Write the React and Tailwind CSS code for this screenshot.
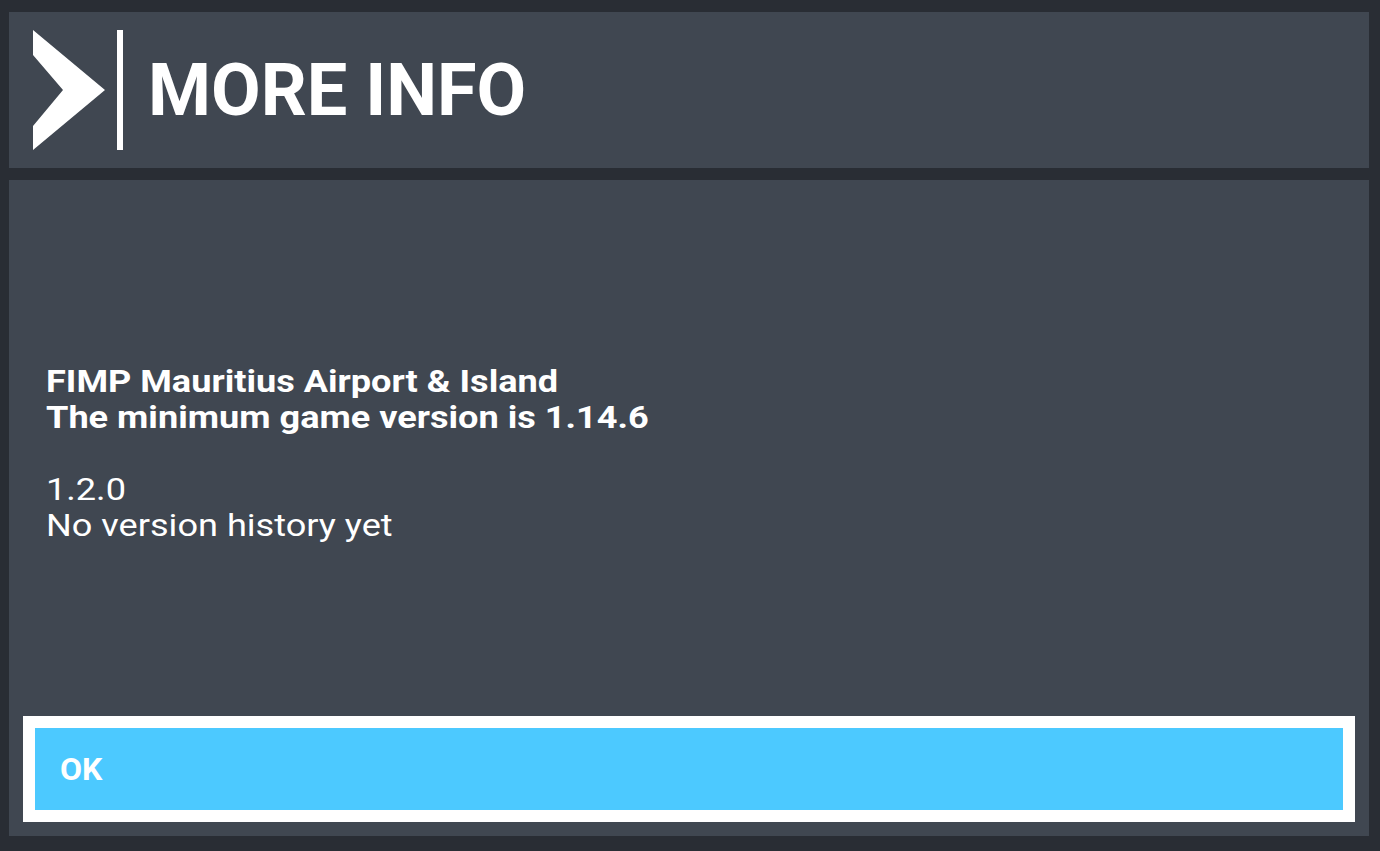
export default function App() {
  return (
    <div
      className="w-[1380px] h-[851px] bg-[#292d34] flex flex-col pt-[12px] pl-[9px] pr-[11px] pb-[15px] gap-[12px] overflow-hidden"
      style={{ fontFamily: "Roboto, 'Liberation Sans', sans-serif" }}
    >
      <div className="h-[156px] bg-[#404751] flex items-center pl-[24px] shrink-0">
        <svg width="73" height="120" viewBox="0 0 73 120" className="shrink-0">
          <polygon points="0,0 72,60 0,120 0,96 30,60 0,25" fill="#ffffff" />
        </svg>
        <div className="w-[6px] h-[120px] bg-white ml-[11px] shrink-0" />
        <div className="ml-[25px] text-white font-bold text-[72px] leading-none tracking-[0px] mt-[2px]">
          MORE INFO
        </div>
      </div>
      <div className="flex-1 bg-[#404751] flex flex-col px-[14px] pb-[14px]">
        <div className="flex-1 flex flex-col justify-center pl-[23px] text-white text-[31px] leading-[36px] pt-[12px]">
          <div className="origin-left scale-x-[1.165] whitespace-nowrap">
            <div className="font-bold">FIMP Mauritius Airport &amp; Island</div>
            <div className="font-bold">The minimum game version is 1.14.6</div>
            <div className="h-[36px]" />
            <div>1.2.0</div>
            <div>No version history yet</div>
          </div>
        </div>
        <div className="h-[106px] border-[12px] border-white bg-[#4cc9ff] flex items-center pl-[25px]">
          <span className="text-white font-bold text-[32px] leading-none">OK</span>
        </div>
      </div>
    </div>
  );
}
